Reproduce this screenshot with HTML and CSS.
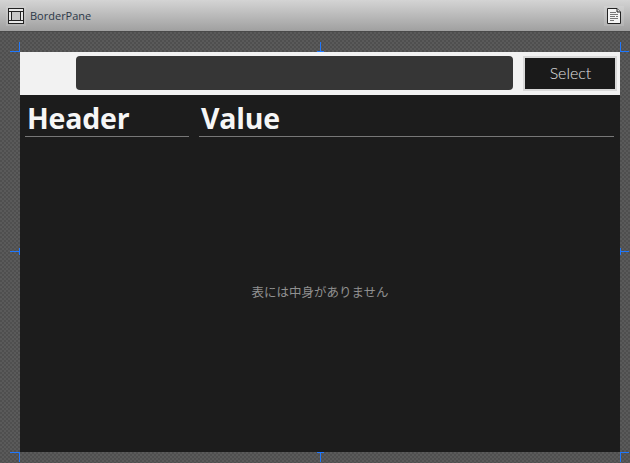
FILE: index.html
```html
<!DOCTYPE html>
<html lang="ja">
<head>
<meta charset="utf-8">
<title>BorderPane</title>
<link rel="stylesheet" href="styles.css">
</head>
<body>
<div class="app">
  <header class="titlebar">
    <div class="title-left">
      <span class="icon-box">
        <svg width="16" height="16" viewBox="0 0 16 16"><rect x="0.5" y="0.5" width="15" height="15" fill="#e8e8e8" stroke="#222"/><path d="M1 3.5H15M1 12.5H15M3.5 3.5V12.5M12.5 3.5V12.5" stroke="#222" fill="none"/><rect x="4" y="4" width="8" height="8" fill="#c8c8c8"/></svg>
      </span>
      <span class="title-text">BorderPane</span>
    </div>
    <span class="icon-box">
      <svg width="14" height="16" viewBox="0 0 14 16"><path d="M0.5 0.5H10L13.5 4V15.5H0.5Z" fill="#f4f4f4" stroke="#222"/><path d="M10 0.5V4H13.5" fill="#ddd" stroke="#222"/><path d="M3 4.5H9M3 6.5H11M3 8.5H8M9 8.5H11M3 10.5H11M3 12.5H7" stroke="#777" fill="none"/></svg>
    </span>
  </header>
  <main class="canvas">
    <div class="pane">
      <div class="toolbar">
        <div class="field"></div>
        <button class="select-btn" type="button">Select</button>
      </div>
      <div class="table">
        <div class="table-head">
          <div class="col col-header">Header</div>
          <div class="col col-value">Value</div>
        </div>
        <div class="table-empty">表には中身がありません</div>
      </div>
      <i class="handle h-tl"></i><i class="handle h-tc"></i><i class="handle h-tr"></i>
      <i class="handle h-ml"></i><i class="handle h-mr"></i>
      <i class="handle h-bl"></i><i class="handle h-bc"></i><i class="handle h-br"></i>
    </div>
  </main>
</div>
</body>
</html>
```
FILE: styles.css
```css
* { box-sizing: border-box; }
html, body { margin: 0; height: 100%; overflow: hidden; }
.app { width: 630px; height: 463px; display: flex; flex-direction: column; font-family: "Liberation Sans", "Noto Sans CJK JP", sans-serif; }
.titlebar {
  height: 32px; flex: none; display: flex; align-items: center; justify-content: space-between;
  padding: 0 6px; background: linear-gradient(#d4d4d4, #a0a0a0);
  border-bottom: 1px solid #4a4a4a; position: relative;
}
.title-left { display: flex; align-items: center; gap: 4px; }
.icon-box { width: 20px; height: 20px; display: flex; align-items: center; justify-content: center; background: rgba(255,255,255,.12); }
.title-text { font-family: "Open Sans", sans-serif; font-size: 11px; color: #2c3848; }
.canvas {
  flex: 1; padding: 20px 10px 11px 20px;
  background-color: #555;
  background-image: conic-gradient(#5a5a5a 25%, #4f4f4f 0 50%, #5a5a5a 0 75%, #4f4f4f 0);
  background-size: 4px 4px;
}
.pane { position: relative; width: 600px; height: 400px; background: #1c1c1c; display: flex; flex-direction: column; }
.toolbar { height: 43px; flex: none; background: #f2f2f2; display: flex; padding: 4px 3px 4px 56px; }
.field { width: 437px; height: 34px; background: #363636; border-radius: 4px; }
.select-btn {
  margin-left: 10px; width: 94px; height: 35px; padding: 0 0 2px 1px; background: #1a1a1a;
  border: 2px solid #d9d9d9; color: #e0e0e0; font-family: "Lato", sans-serif; font-size: 16px; font-weight: 300;
}
.table { flex: 1; display: flex; flex-direction: column; padding: 0 6px 0 5px; }
.table-head { display: flex; gap: 10px; height: 42px; flex: none; }
.col {
  font-family: "Open Sans", sans-serif; font-weight: 700; font-size: 28.5px; letter-spacing: -0.2px; line-height: 47px; color: #f6f6f6;
  height: 42px; border-bottom: 1px solid #777; padding-left: 2px; white-space: nowrap; overflow: hidden;
}
.col-header { width: 164px; }
.col-value { width: 415px; }
.table-empty {
  flex: 1; display: flex; align-items: center; justify-content: center; padding: 0 0 6px 1px;
  font-family: "Noto Sans CJK JP", sans-serif; font-size: 12.5px; color: #909090;
}
.handle { position: absolute; width: 11px; height: 11px; }
.handle::before, .handle::after { content: ""; position: absolute; background: #1f78ff; }
.h-tl, .h-bl, .h-ml { left: -10px; }
.h-tr, .h-br, .h-mr { right: -10px; }
.h-tl, .h-tr { top: -10px; }
.h-bl, .h-br { bottom: -10px; }
.h-tl::before { left: 9px; top: 0; width: 1px; height: 10px; }
.h-tl::after { left: 0; top: 9px; width: 10px; height: 1px; }
.h-tr::before { left: 1px; top: 0; width: 1px; height: 10px; }
.h-tr::after { left: 1px; top: 9px; width: 9px; height: 1px; }
.h-bl::before { left: 9px; top: 1px; width: 1px; height: 10px; }
.h-bl::after { left: 0; top: 1px; width: 10px; height: 1px; }
.h-br::before { left: 1px; top: 1px; width: 1px; height: 10px; }
.h-br::after { left: 1px; top: 1px; width: 9px; height: 1px; }
.h-tc { left: 295px; top: -10px; }
.h-tc::before { left: 5px; top: 0; width: 1px; height: 10px; }
.h-tc::after { left: 2px; top: 9px; width: 7px; height: 1px; }
.h-bc { left: 295px; bottom: -10px; }
.h-bc::before { left: 5px; top: 1px; width: 1px; height: 10px; }
.h-bc::after { left: 2px; top: 1px; width: 7px; height: 1px; }
.h-ml { top: 194px; }
.h-ml::before { left: 9px; top: 2px; width: 1px; height: 7px; }
.h-ml::after { left: 0; top: 5px; width: 10px; height: 1px; }
.h-mr { top: 194px; }
.h-mr::before { left: 1px; top: 2px; width: 1px; height: 7px; }
.h-mr::after { left: 1px; top: 5px; width: 9px; height: 1px; }
```
